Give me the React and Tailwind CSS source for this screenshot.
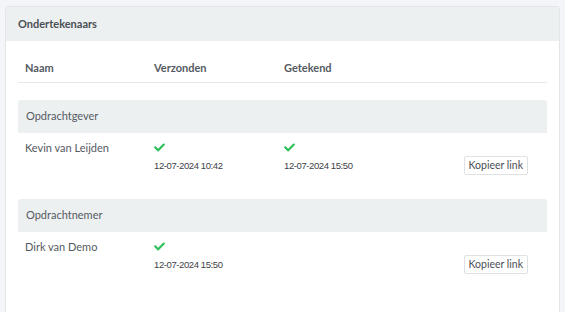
const Check = () => (
  <svg viewBox="0 0 512 512" className="w-[11px] h-[11px]" fill="#2fbf5a">
    <path d="M173.9 439.4l-166.4-166.4c-10-10-10-26.2 0-36.2l36.2-36.2c10-10 26.2-10 36.2 0L192 312.7 432.1 72.6c10-10 26.2-10 36.2 0l36.2 36.2c10 10 10 26.2 0 36.2L210.1 439.4c-10 10-26.2 10-36.2 0z" />
  </svg>
)

const groups = [
  {
    title: 'Opdrachtgever',
    name: 'Kevin van Leijden',
    sent: '12-07-2024 10:42',
    signed: '12-07-2024 15:50',
  },
  {
    title: 'Opdrachtnemer',
    name: 'Dirk van Demo',
    sent: '12-07-2024 15:50',
    signed: null,
  },
]

const Stamp = ({ children }) => (
  <div
    className="mt-[6px] text-[9.5px] tracking-[-0.4px] text-[#3d4247]"
    style={{ fontFamily: '"Liberation Sans", Arial, sans-serif' }}
  >
    {children}
  </div>
)

export default function App() {
  return (
    <div
      className="w-[565px] h-[312px] bg-[#f4f5f8] pt-[6px] pl-[5px] pr-[5px] overflow-hidden text-[#555b62]"
      style={{ fontFamily: 'Lato, "Open Sans", sans-serif' }}
    >
      <div className="h-[320px] bg-white border border-[#e3e5e8] rounded-[3px]">
        <div className="h-[34px] bg-[#edf0f1] flex items-center px-[12px] text-[11px] font-bold text-[#4a4f55]">
          Ondertekenaars
        </div>
        <div className="px-[12px] pt-[14px]">
          <div className="flex h-[28px] items-center border-b border-[#e6e8ea] text-[11px] font-bold text-[#555b62]">
            <div className="w-[129px] pl-[7px]">Naam</div>
            <div className="w-[130px] pl-[7px]">Verzonden</div>
            <div className="pl-[7px]">Getekend</div>
          </div>
          <div className="mt-[17px]">
            {groups.map((g, i) => (
              <div key={i}>
                <div className="h-[33px] bg-[#edf0f1] rounded-t-[3px] flex items-center pl-[8px] text-[11px]">
                  {g.title}
                </div>
                <div className="flex h-[66px] text-[11px]">
                  <div className="w-[129px] pl-[7px] pt-[7px]">{g.name}</div>
                  <div className="w-[130px] pl-[7px] pt-[9px]">
                    <Check />
                    <Stamp>{g.sent}</Stamp>
                  </div>
                  <div className="flex-1 pl-[7px] pt-[9px]">
                    {g.signed && (
                      <>
                        <Check />
                        <Stamp>{g.signed}</Stamp>
                      </>
                    )}
                  </div>
                  <div className="pr-[19px] pt-[23px]">
                    <button className="h-[19px] px-[4px] border border-[#dfe2e5] rounded-[2px] bg-white text-[10.5px] text-[#4a4f55] leading-none">
                      Kopieer link
                    </button>
                  </div>
                </div>
              </div>
            ))}
          </div>
        </div>
      </div>
    </div>
  )
}
